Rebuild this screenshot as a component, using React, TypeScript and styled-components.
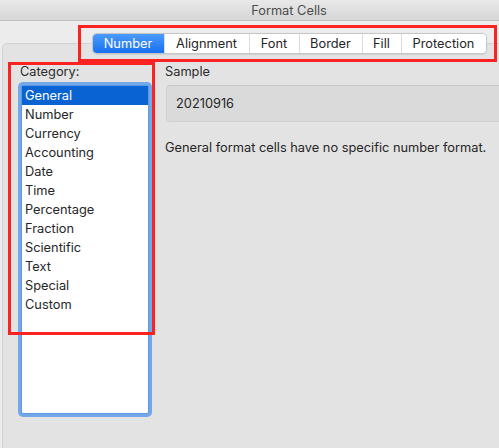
import React from "react";
import styled, { createGlobalStyle } from "styled-components";

const Global = createGlobalStyle`
  html, body { margin: 0; padding: 0; background: #ececec; }
  body { font-family: Inter, "Liberation Sans", Arial, sans-serif; -webkit-font-smoothing: antialiased; }
`;

const FS = "12.8px";

const Viewport = styled.div`
  position: relative;
  width: 499px;
  height: 448px;
  overflow: hidden;
  background: #ececec;
`;

const Window = styled.div`
  width: 578px;
  height: 448px;
  display: flex;
  flex-direction: column;
`;

const TitleBar = styled.div`
  height: 20px;
  flex: none;
  display: flex;
  align-items: center;
  justify-content: center;
  background: linear-gradient(#e9e9e9, #d6d6d6);
  border-bottom: 1px solid #c2c2c2;
  font-size: ${FS};
  color: #4c4c4c;
`;

const TabRow = styled.div`
  display: flex;
  justify-content: center;
  margin-top: 12px;
  position: relative;
  z-index: 1;
`;

const Segmented = styled.div`
  display: flex;
  height: 21px;
  box-sizing: border-box;
  border: 1px solid #c6c6c6;
  border-radius: 5px;
  background: #fff;
  overflow: hidden;
  box-shadow: 0 0.5px 1px rgba(0, 0, 0, 0.08);
`;

const Segment = styled.div<{ $active?: boolean; $w: number }>`
  width: ${(p) => p.$w}px;
  box-sizing: border-box;
  display: flex;
  align-items: center;
  justify-content: center;
  font-size: ${FS};
  color: ${(p) => (p.$active ? "#fff" : "#262626")};
  background: ${(p) => (p.$active ? "linear-gradient(#4b9bfa, #1670f1)" : "#fff")};
  & + & {
    border-left: 1px solid #dcdcdc;
  }
`;

const Panel = styled.div`
  margin: -11px 2px 0;
  flex: 1;
  background: #e3e3e3;
  border: 1px solid #d2d2d2;
  border-bottom: none;
  border-radius: 5px 5px 0 0;
  padding: 20px 15px 0 17px;
  display: flex;
  gap: 15px;
`;

const LeftCol = styled.div`
  width: 130px;
  display: flex;
  flex-direction: column;
  gap: 5px;
`;

const RightCol = styled.div`
  flex: 1;
  display: flex;
  flex-direction: column;
`;

const Label = styled.div`
  font-size: ${FS};
  line-height: 16px;
  color: #2b2b2b;
`;

const List = styled.div`
  margin-left: 1px;
  width: 128px;
  height: 329px;
  box-sizing: border-box;
  background: #fff;
  border: 1px solid #5f97e2;
  box-shadow: 0 0 0 3px #72a7e9;
  border-radius: 2px;
`;

const Row = styled.div<{ $selected?: boolean }>`
  height: 19px;
  line-height: 19px;
  padding-left: 3px;
  font-size: ${FS};
  color: ${(p) => (p.$selected ? "#fff" : "#262626")};
  background: ${(p) => (p.$selected ? "#0a63d3" : "transparent")};
`;

const SampleBox = styled.div`
  margin-top: 5px;
  margin-left: 1px;
  height: 37px;
  box-sizing: border-box;
  background: #dadada;
  border: 1px solid #d0d0d0;
  border-top-color: #c8c8c8;
  border-radius: 4px;
  display: flex;
  align-items: center;
  padding-left: 9px;
  font-size: ${FS};
  color: #262626;
`;

const Description = styled.div`
  margin-top: 18px;
  font-size: ${FS};
  line-height: 16px;
  color: #262626;
`;

const Annotation = styled.div<{ $x: number; $y: number; $w: number; $h: number }>`
  position: absolute;
  left: ${(p) => p.$x}px;
  top: ${(p) => p.$y}px;
  width: ${(p) => p.$w}px;
  height: ${(p) => p.$h}px;
  box-sizing: border-box;
  border: 3px solid #fb2222;
  pointer-events: none;
  z-index: 5;
`;

const tabs: [string, number][] = [
  ["Number", 71],
  ["Alignment", 85],
  ["Font", 50],
  ["Border", 63],
  ["Fill", 39],
  ["Protection", 85],
];

const categories = [
  "General",
  "Number",
  "Currency",
  "Accounting",
  "Date",
  "Time",
  "Percentage",
  "Fraction",
  "Scientific",
  "Text",
  "Special",
  "Custom",
];

export default function App() {
  return (
    <Viewport>
      <Global />
      <Window>
        <TitleBar>Format Cells</TitleBar>
        <TabRow>
          <Segmented>
            {tabs.map(([t, w], i) => (
              <Segment key={t} $w={w} $active={i === 0}>
                {t}
              </Segment>
            ))}
          </Segmented>
        </TabRow>
        <Panel>
          <LeftCol>
            <Label>Category:</Label>
            <List>
              {categories.map((c, i) => (
                <Row key={c} $selected={i === 0}>
                  {c}
                </Row>
              ))}
            </List>
          </LeftCol>
          <RightCol>
            <Label>Sample</Label>
            <SampleBox>20210916</SampleBox>
            <Description>General format cells have no specific number format.</Description>
          </RightCol>
        </Panel>
      </Window>
      <Annotation $x={78} $y={25} $w={419} $h={37} />
      <Annotation $x={8} $y={62} $w={147} $h={273} />
    </Viewport>
  );
}
